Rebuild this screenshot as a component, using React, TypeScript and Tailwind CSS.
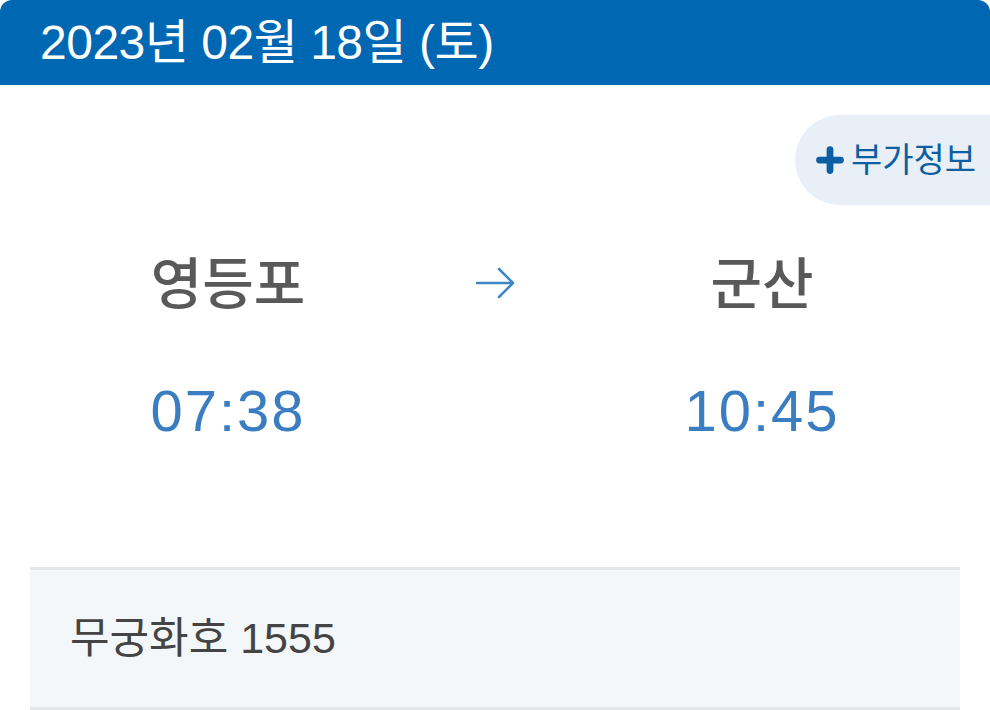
import { Plus } from 'lucide-react';

const font = { fontFamily: '"Liberation Sans", "Noto Sans CJK KR", sans-serif' };

export default function App() {
  return (
    <div className="w-[990px] h-[710px] overflow-hidden bg-white" style={font}>
      {/* Date header */}
      <div className="h-[85px] bg-[#0067b3] rounded-t-[12px] flex items-center pl-[40px]">
        <h1 className="text-white text-[48px] leading-none tracking-[-0.5px]">2023년 02월 18일 (토)</h1>
      </div>

      {/* Extra info button */}
      <div className="flex justify-end mt-[30px]">
        <button className="h-[90px] w-[195px] rounded-l-[45px] bg-[#e9eff6] flex items-center pl-[17px] gap-[3px] text-[#0d5fa3]">
          <Plus size={36} strokeWidth={4.5} />
          <span className="text-[34px] leading-none">부가정보</span>
        </button>
      </div>

      {/* Route */}
      <div className="px-[30px] grid grid-cols-[396px_1fr_396px] mt-[52px]">
        <div className="flex flex-col items-center">
          <p className="text-[56px] leading-none font-medium text-[#595959]">영등포</p>
          <p className="mt-[69px] text-[58px] leading-none text-[#3a7dc0] tracking-[2px]">07:38</p>
        </div>
        <div className="flex justify-center pt-[9px]">
          <svg width="42" height="34" viewBox="0 0 42 34" fill="none" stroke="#3d87c8" strokeWidth="2.5" strokeLinecap="round" strokeLinejoin="round">
            <path d="M3 17h36M25 3l14 14-14 14" />
          </svg>
        </div>
        <div className="flex flex-col items-center">
          <p className="text-[56px] leading-none font-medium text-[#595959]">군산</p>
          <p className="mt-[69px] text-[58px] leading-none text-[#3a7dc0] tracking-[2px]">10:45</p>
        </div>
      </div>

      {/* Train */}
      <div className="mx-[30px] mt-[127px] h-[143px] bg-[#f4f7fa] border-y-[3px] border-[#e3e5e8] flex items-center pl-[40px]">
        <p className="text-[43px] leading-none text-[#444444]">무궁화호 1555</p>
      </div>
    </div>
  );
}
